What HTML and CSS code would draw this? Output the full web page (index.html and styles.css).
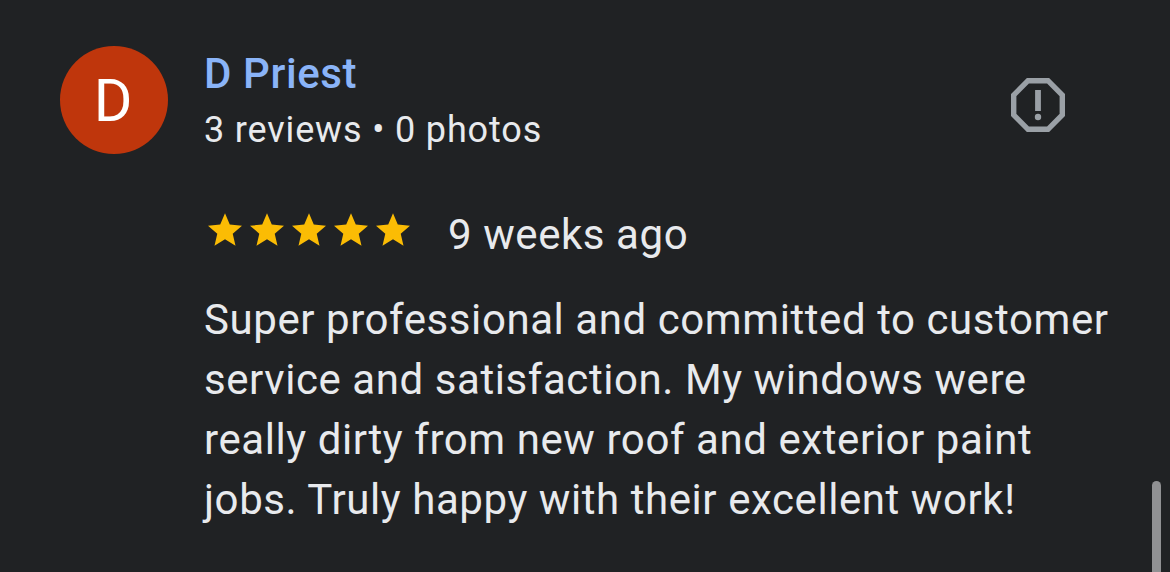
FILE: index.html
```
<!DOCTYPE html>
<html lang="en">
<head>
    <meta charset="UTF-8">
    <meta name="viewport" content="width=device-width, initial-scale=1.0">
    <title>Review</title>
    <link rel="stylesheet" href="styles.css">
</head>
<body>

    <div class="review">
        <div class="avatar"><span>D</span></div>

        <div class="content">
            <div class="header">
                <div class="author">
                    <div class="name">D Priest</div>
                    <div class="stats">3 reviews • 0 photos</div>
                </div>
                <svg class="report" viewBox="0 0 54 54">
                    <path d="M17 2.7h20L51.3 17v20L37 51.3H17L2.7 37V17z" fill="none" stroke="#9aa0a6" stroke-width="5.4"/>
                    <path d="M24.1 12h5.8v21h-5.8z" fill="#9aa0a6"/>
                    <circle cx="27" cy="39" r="3.2" fill="#9aa0a6"/>
                </svg>
            </div>

            <div class="rating">
                <div class="stars">
                    <svg viewBox="2 2 20 19"><path d="M12 17.27 18.18 21l-1.64-7.03L22 9.24l-7.19-.61L12 2 9.19 8.63 2 9.24l5.46 4.73L5.82 21z"/></svg>
                    <svg viewBox="2 2 20 19"><path d="M12 17.27 18.18 21l-1.64-7.03L22 9.24l-7.19-.61L12 2 9.19 8.63 2 9.24l5.46 4.73L5.82 21z"/></svg>
                    <svg viewBox="2 2 20 19"><path d="M12 17.27 18.18 21l-1.64-7.03L22 9.24l-7.19-.61L12 2 9.19 8.63 2 9.24l5.46 4.73L5.82 21z"/></svg>
                    <svg viewBox="2 2 20 19"><path d="M12 17.27 18.18 21l-1.64-7.03L22 9.24l-7.19-.61L12 2 9.19 8.63 2 9.24l5.46 4.73L5.82 21z"/></svg>
                    <svg viewBox="2 2 20 19"><path d="M12 17.27 18.18 21l-1.64-7.03L22 9.24l-7.19-.61L12 2 9.19 8.63 2 9.24l5.46 4.73L5.82 21z"/></svg>
                </div>
                <div class="date">9 weeks ago</div>
            </div>

            <p class="text">
                Super professional and committed to customer<br>
                service and satisfaction. My windows were<br>
                really dirty from new roof and exterior paint<br>
                jobs. Truly happy with their excellent work!
            </p>
        </div>
    </div>

    <!-- Scrollbar -->
    <div class="scrollbar"></div>

</body>
</html>
```
FILE: styles.css
```
body {
    margin: 0;
    height: 572px;
    position: relative;
    overflow: hidden;
    background-color: #202224;
    color: #e8eaed;
    font-family: Roboto, Arial, sans-serif;
}

.review {
    display: flex;
    gap: 36px;
    padding: 46px 0 0 60px;
}

.avatar {
    flex: none;
    display: flex;
    align-items: center;
    justify-content: center;
    box-sizing: border-box;
    width: 108px;
    height: 108px;
    padding-right: 2px;
    border-radius: 50%;
    background-color: #bf360c;
    color: white;
    font-size: 59px;
}

.content {
    flex: 1;
    white-space: nowrap;
}

.header {
    display: flex;
    justify-content: space-between;
    padding: 0 105px 0 0;
    height: 160px;
}

.name {
    margin-top: 4px;
    color: #8ab4f8;
    font-size: 42px;
    font-weight: 500;
    line-height: 48px;
    letter-spacing: 0.6px;
}

.stats {
    margin-top: 8px;
    font-size: 36px;
    line-height: 48px;
    letter-spacing: 0.85px;
}

.report {
    width: 54px;
    height: 54px;
    margin-top: 32px;
}

.rating {
    display: flex;
    height: 60px;
}

.stars {
    display: flex;
    gap: 8px;
    padding: 7px 0 0 4px;
}

.stars svg {
    width: 34px;
    height: 33px;
    fill: #fbbc04;
}

.date {
    margin-left: 38px;
    font-size: 42px;
    line-height: 58px;
    letter-spacing: 0.57px;
}

.text {
    margin: 24px 0 0;
    font-size: 42px;
    line-height: 60px;
    letter-spacing: 0.57px;
}

.scrollbar {
    position: absolute;
    top: 481px;
    right: 9px;
    width: 9px;
    height: 110px;
    border-radius: 5px;
    background-color: #909193;
}
```
